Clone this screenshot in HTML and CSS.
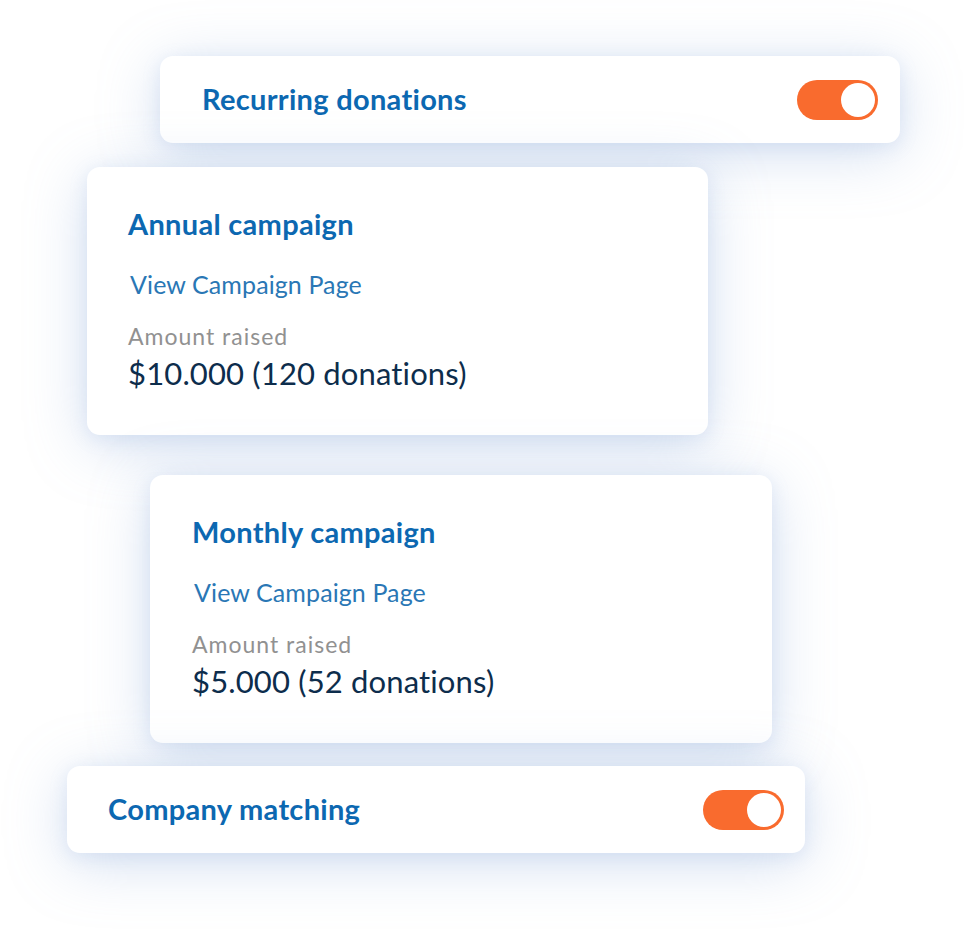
FILE: index.html
```html
<!DOCTYPE html>
<html>
<head>
<meta charset="utf-8">
<link rel="stylesheet" href="styles.css">
</head>
<body>
<main class="stack">
  <section class="card toggle-card card-recurring">
    <h2 class="title">Recurring donations</h2>
    <span class="switch"><span class="knob"></span></span>
  </section>
  <section class="card campaign card-annual">
    <h2 class="title">Annual campaign</h2>
    <a class="link">View Campaign Page</a>
    <div class="label">Amount raised</div>
    <div class="amount">$10.000 (120 donations)</div>
  </section>
  <section class="card campaign card-monthly">
    <h2 class="title">Monthly campaign</h2>
    <a class="link">View Campaign Page</a>
    <div class="label">Amount raised</div>
    <div class="amount">$5.000 (52 donations)</div>
  </section>
  <section class="card toggle-card card-company">
    <h2 class="title">Company matching</h2>
    <span class="switch"><span class="knob"></span></span>
  </section>
</main>
</body>
</html>
```
FILE: styles.css
```css
html, body {
  margin: 0;
  padding: 0;
  background: #ffffff;
}
body {
  width: 964px;
  height: 929px;
  overflow: hidden;
  font-family: "Lato", "Open Sans", sans-serif;
}
.stack {
  display: flex;
  flex-direction: column;
  align-items: flex-start;
  padding-top: 56px;
}
.card {
  background: #ffffff;
  border-radius: 13px;
  box-shadow: 0 10px 60px rgba(130, 160, 215, 0.34), 0 4px 18px rgba(140, 170, 220, 0.18);
  box-sizing: border-box;
}
.title {
  margin: 0;
  font-family: "Lato", sans-serif;
  font-weight: 700;
  font-size: 29px;
  line-height: 35px;
  color: #0c68b1;
  letter-spacing: 0.3px;
}
.toggle-card {
  display: flex;
  align-items: center;
  justify-content: space-between;
  height: 87px;
  padding: 0 22px 0 42px;
}
.toggle-card .title {
  padding-bottom: 3px;
}
.card-recurring {
  margin-left: 160px;
  width: 740px;
}
.card-company {
  margin-left: 67px;
  width: 738px;
  margin-top: 23px;
  padding-left: 41px;
  padding-right: 21px;
}
.campaign {
  display: flex;
  flex-direction: column;
  align-items: flex-start;
  height: 268px;
  width: 621px;
  padding: 39px 41px 0 41px;
}
.card-annual {
  margin-left: 87px;
  margin-top: 24px;
}
.card-monthly {
  margin-left: 150px;
  margin-top: 40px;
  width: 622px;
  padding-left: 42px;
}
.link {
  margin-top: 28px;
  margin-left: 2px;
  font-size: 25px;
  line-height: 30px;
  color: #2a77b5;
  letter-spacing: 0.1px;
}
.label {
  margin-top: 23px;
  font-size: 23px;
  line-height: 28px;
  color: #919191;
  letter-spacing: 1px;
}
.amount {
  margin-top: 5px;
  font-size: 31px;
  line-height: 37px;
  color: #0d2d4c;
  letter-spacing: 0.15px;
}
.switch {
  display: flex;
  align-items: center;
  justify-content: flex-end;
  width: 81px;
  height: 40px;
  border-radius: 20px;
  background: #f96b2e;
  padding: 3px;
  box-sizing: border-box;
}
.knob {
  width: 34px;
  height: 34px;
  border-radius: 50%;
  background: #ffffff;
}
```
